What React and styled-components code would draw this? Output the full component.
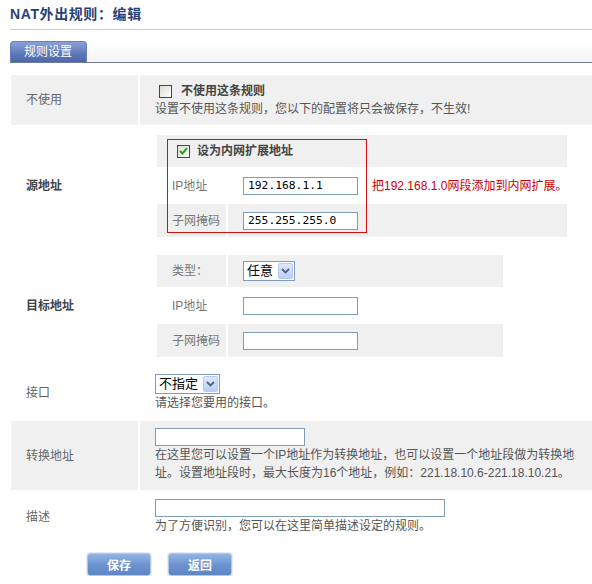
import React from "react";
import styled, { createGlobalStyle, css } from "styled-components";

const GlobalStyle = createGlobalStyle`
  html, body { margin: 0; padding: 0; background: #fff; }
  body {
    width: 592px;
    overflow: hidden;
    font-family: "Liberation Sans", "Noto Sans CJK SC", sans-serif;
    font-size: 12px;
    line-height: 18px;
    color: #555;
  }
  * { box-sizing: border-box; }
`;

const Page = styled.div`
  padding-left: 10px;
  width: 592px;
`;

const Title = styled.h1`
  margin: 0;
  height: 30px;
  display: flex;
  align-items: center;
  padding-bottom: 2px;
  border-bottom: 1px solid #cccccc;
  font-size: 14px;
  font-weight: bold;
  color: #2b3f78;
  letter-spacing: 0.6px;
`;

const TabBar = styled.div`
  margin-top: 11px;
  height: 22px;
  display: flex;
  align-items: flex-end;
  border-bottom: 1px solid #6c7b9b;
  background: linear-gradient(#ffffff, #f4f4f4);
`;

const Tab = styled.div`
  width: 77px;
  height: 21px;
  display: flex;
  align-items: center;
  padding-left: 13px;
  color: #fff;
  font-size: 12px;
  border-radius: 4px 4px 0 0;
  background: linear-gradient(#8aa2d8, #5d78b8 60%, #4d67a8);
  border: 1px solid #6580bd;
  border-bottom: none;
`;

const Form = styled.div`
  margin-top: 12px;
  margin-left: 1px;
  display: flex;
  flex-direction: column;
  gap: 2px;
`;

const Row = styled.div`
  display: grid;
  grid-template-columns: 127px 1fr;
  column-gap: 2px;
`;

const LabelCell = styled.div`
  display: flex;
  align-items: center;
  padding-left: 15px;
  background: ${(p) => (p.$shade ? "#f0f0f0" : "#fff")};
  color: ${(p) => (p.$strong ? "#444" : "#666")};
  font-weight: ${(p) => (p.$strong ? "bold" : "normal")};
`;

const ValueCell = styled.div`
  background: ${(p) => (p.$shade ? "#f0f0f0" : "#fff")};
  padding: ${(p) => p.$pad || "7px 0 7px 15px"};
  display: flex;
  flex-direction: column;
  align-items: flex-start;
`;

const Line = styled.div`
  height: 18px;
  line-height: 18px;
  white-space: nowrap;
  display: flex;
  align-items: center;
  gap: ${(p) => p.$gap || 0}px;
  color: #555;
`;

const BoldText = styled.span`
  font-weight: bold;
  color: #444;
`;

const InnerTable = styled.div`
  position: relative;
  width: 346px;
  display: grid;
  grid-template-columns: 69px 1fr;
  grid-template-rows: 32px 33px 33px;
  gap: 2px;
`;

const InnerLabel = styled.div`
  display: flex;
  align-items: center;
  padding-left: 15px;
  color: #777;
  background: ${(p) => (p.$shade ? "#f0f0f0" : "#fff")};
`;

const InnerValue = styled.div`
  display: flex;
  align-items: center;
  gap: 14px;
  padding-left: ${(p) => (p.$wide ? 20 : 15)}px;
  white-space: nowrap;
  background: ${(p) => (p.$shade ? "#f0f0f0" : "#fff")};
  ${(p) =>
    p.$wide &&
    css`
      grid-column: 1 / span 2;
      gap: 7px;
    `}
`;

const RedFrame = styled.div`
  position: absolute;
  left: 10px;
  top: 4px;
  width: 200px;
  height: 94px;
  border: 1px solid #d21010;
  pointer-events: none;
`;

const Hint = styled.span`
  color: #cc0000;
`;

const TextInput = styled.input`
  width: ${(p) => p.$w}px;
  height: 18px;
  flex: none;
  border: 1px solid #7f9db9;
  padding: 0 4px;
  margin: 0;
  font-family: "DejaVu Sans Mono", "Liberation Mono", monospace;
  font-size: 11.3px;
  color: #000;
  background: #fff;
  outline: none;
`;

const SelectBox = styled.div`
  width: ${(p) => p.$w}px;
  height: 20px;
  flex: none;
  border: 1px solid #7f9db9;
  background: #fff;
  display: flex;
  align-items: center;
  justify-content: space-between;
  padding: 0 1px 0 3px;
  font-size: 13px;
  color: #000;
`;

const SelectButton = styled.span`
  width: 15px;
  height: 16px;
  border: 1px solid #b7c9ef;
  border-radius: 2px;
  background: linear-gradient(#dfe8fc, #b9cef7);
  display: flex;
  align-items: center;
  justify-content: center;
`;

const CheckBox = styled.span`
  width: 13px;
  height: 13px;
  flex: none;
  margin-left: ${(p) => p.$indent || 0}px;
  border: 1px solid #1c5180;
  background: linear-gradient(135deg, #dcdcd5, #ffffff);
  display: inline-flex;
  align-items: center;
  justify-content: center;
`;

const Buttons = styled.div`
  margin-top: 11px;
  padding-left: 77px;
  display: flex;
  gap: 17px;
`;

const Button = styled.button`
  width: 64px;
  height: 23px;
  border: 1px solid #b6c7e2;
  border-radius: 3px;
  background: linear-gradient(#93b3e4, #6b92cf 55%, #5f86c4);
  color: #fff;
  font-family: "Noto Sans CJK SC", sans-serif;
  font-size: 12px;
  font-weight: bold;
  padding: 0;
  box-shadow: 0 0 0 1px #e6ecf5;
`;

const Chevron = () => (
  <svg width="9" height="6" viewBox="0 0 9 6">
    <path d="M1 1 L4.5 4.5 L8 1" fill="none" stroke="#4d6185" strokeWidth="1.8" />
  </svg>
);

const Check = () => (
  <svg width="9" height="8" viewBox="0 0 9 8">
    <path d="M1 4 L3.5 6.5 L8 1.2" fill="none" stroke="#21a121" strokeWidth="2" />
  </svg>
);

const Select = ({ w, children }) => (
  <SelectBox $w={w}>
    <span>{children}</span>
    <SelectButton>
      <Chevron />
    </SelectButton>
  </SelectBox>
);

export default function App() {
  return (
    <>
      <GlobalStyle />
      <Page>
        <Title>NAT外出规则：编辑</Title>
        <TabBar>
          <Tab>规则设置</Tab>
        </TabBar>
        <Form>
          <Row>
            <LabelCell $shade>不使用</LabelCell>
            <ValueCell $shade>
              <Line $gap={9}>
                <CheckBox $indent={4} />
                <BoldText>不使用这条规则</BoldText>
              </Line>
              <Line>设置不使用这条规则，您以下的配置将只会被保存，不生效!</Line>
            </ValueCell>
          </Row>

          <Row>
            <LabelCell $strong>源地址</LabelCell>
            <ValueCell $pad="8px 0 8px 17px">
              <InnerTable>
                <InnerValue $wide $shade>
                  <CheckBox>
                    <Check />
                  </CheckBox>
                  <BoldText>设为内网扩展地址</BoldText>
                </InnerValue>
                <InnerLabel>IP地址</InnerLabel>
                <InnerValue>
                  <TextInput $w={115} defaultValue="192.168.1.1" />
                  <Hint>把192.168.1.0网段添加到内网扩展。</Hint>
                </InnerValue>
                <InnerLabel $shade>子网掩码</InnerLabel>
                <InnerValue $shade>
                  <TextInput $w={115} defaultValue="255.255.255.0" />
                </InnerValue>
                <RedFrame />
              </InnerTable>
            </ValueCell>
          </Row>

          <Row>
            <LabelCell $strong>目标地址</LabelCell>
            <ValueCell $pad="8px 0 8px 17px">
              <InnerTable>
                <InnerLabel $shade>类型：</InnerLabel>
                <InnerValue $shade>
                  <Select w={52}>任意</Select>
                </InnerValue>
                <InnerLabel>IP地址</InnerLabel>
                <InnerValue>
                  <TextInput $w={115} />
                </InnerValue>
                <InnerLabel $shade>子网掩码</InnerLabel>
                <InnerValue $shade>
                  <TextInput $w={115} />
                </InnerValue>
              </InnerTable>
            </ValueCell>
          </Row>

          <Row>
            <LabelCell>接口</LabelCell>
            <ValueCell>
              <Select w={65}>不指定</Select>
              <Line>请选择您要用的接口。</Line>
            </ValueCell>
          </Row>

          <Row>
            <LabelCell $shade>转换地址</LabelCell>
            <ValueCell $shade $pad="7px 0 8px 15px">
              <TextInput $w={150} />
              <Line>在这里您可以设置一个IP地址作为转换地址，也可以设置一个地址段做为转换地</Line>
              <Line>址。设置地址段时，最大长度为16个地址，例如：221.18.10.6-221.18.10.21。</Line>
            </ValueCell>
          </Row>

          <Row>
            <LabelCell>描述</LabelCell>
            <ValueCell>
              <TextInput $w={290} />
              <Line>为了方便识别，您可以在这里简单描述设定的规则。</Line>
            </ValueCell>
          </Row>
        </Form>
        <Buttons>
          <Button>保存</Button>
          <Button>返回</Button>
        </Buttons>
      </Page>
    </>
  );
}
